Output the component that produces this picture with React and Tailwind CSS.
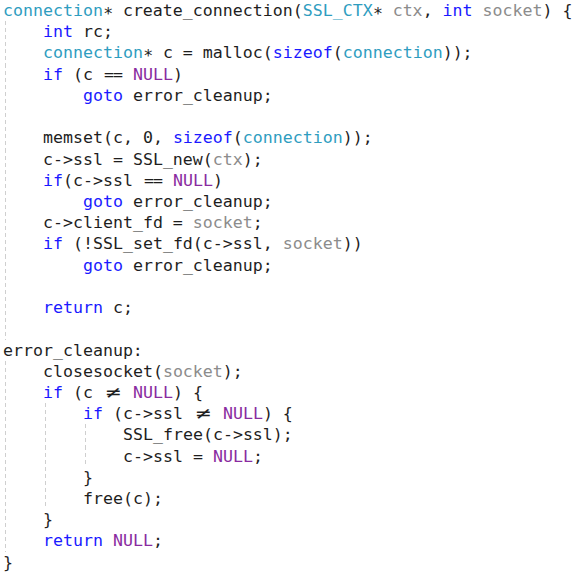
import React from 'react';

// token colours
const C = {
  D: 'text-[#1e1e1e]',
  K: 'text-[#1a1aff]',
  T: 'text-[#2f9dbf]',
  N: 'text-[#8a2ba0]',
  P: 'text-[#8c8c8c]',
};

const EQ = { eq: true };
const NE = { ne: true };

// [guides, indentSpaces, tokens]
const lines = [
  [0, 0, [['T', 'connection'], ['D', '\u2217 create_connection('], ['T', 'SSL_CTX'], ['D', '\u2217 '], ['P', 'ctx'], ['D', ', '], ['K', 'int'], ['D', ' '], ['P', 'socket'], ['D', ') {']]],
  [1, 4, [['K', 'int'], ['D', ' rc;']]],
  [1, 4, [['T', 'connection'], ['D', '\u2217 c = malloc('], ['K', 'sizeof'], ['D', '('], ['T', 'connection'], ['D', '));']]],
  [1, 4, [['K', 'if'], ['D', ' (c '], EQ, ['D', ' '], ['N', 'NULL'], ['D', ')']]],
  [1, 8, [['K', 'goto'], ['D', ' error_cleanup;']]],
  [1, 0, []],
  [1, 4, [['D', 'memset(c, 0, '], ['K', 'sizeof'], ['D', '('], ['T', 'connection'], ['D', '));']]],
  [1, 4, [['D', 'c->ssl = SSL_new('], ['P', 'ctx'], ['D', ');']]],
  [1, 4, [['K', 'if'], ['D', '(c->ssl '], EQ, ['D', ' '], ['N', 'NULL'], ['D', ')']]],
  [1, 8, [['K', 'goto'], ['D', ' error_cleanup;']]],
  [1, 4, [['D', 'c->client_fd = '], ['P', 'socket'], ['D', ';']]],
  [1, 4, [['K', 'if'], ['D', ' (!SSL_set_fd(c->ssl, '], ['P', 'socket'], ['D', '))']]],
  [1, 8, [['K', 'goto'], ['D', ' error_cleanup;']]],
  [1, 0, []],
  [1, 4, [['K', 'return'], ['D', ' c;']]],
  [1, 0, []],
  [0, 0, [['D', 'error_cleanup:']]],
  [1, 4, [['D', 'closesocket('], ['P', 'socket'], ['D', ');']]],
  [1, 4, [['K', 'if'], ['D', ' (c '], NE, ['D', ' '], ['N', 'NULL'], ['D', ') {']]],
  [2, 8, [['K', 'if'], ['D', ' (c->ssl '], NE, ['D', ' '], ['N', 'NULL'], ['D', ') {']]],
  [3, 12, [['D', 'SSL_free(c->ssl);']]],
  [3, 12, [['D', 'c->ssl = '], ['N', 'NULL'], ['D', ';']]],
  [2, 8, [['D', '}']]],
  [2, 8, [['D', 'free(c);']]],
  [1, 4, [['D', '}']]],
  [1, 4, [['K', 'return'], ['D', ' '], ['N', 'NULL'], ['D', ';']]],
  [0, 0, [['D', '}']]],
];

const Guide = () => (
  <span className="w-[40px] shrink-0 self-stretch pl-[2px]">
    <span className="block w-px h-full bg-[repeating-linear-gradient(to_bottom,#cfcfcf_0_4px,transparent_4px_7px)]" />
  </span>
);

const Token = ({ t }) => {
  if (t.eq) {
    return <span className="inline-flex w-[20px] justify-center tracking-[-1px] text-[#1e1e1e]">==</span>;
  }
  if (t.ne) {
    return (
      <span className="inline-flex w-[20px] justify-center text-[#1e1e1e]">
        <span className="inline-block scale-x-150">≠</span>
      </span>
    );
  }
  return <span className={C[t[0]]}>{t[1]}</span>;
};

export default function App() {
  return (
    <div className="w-[577px] h-[578px] bg-white overflow-hidden pl-[3px] font-['DejaVu_Sans_Mono',monospace] text-[16.6px] leading-[21.23px]">
      {lines.map(([guides, indent, tokens], i) => {
        const rest = Math.max(indent - guides * 4, 0);
        return (
          <div key={i} className="flex h-[21.23px] whitespace-pre">
            {Array.from({ length: guides }).map((_, g) => (
              <Guide key={g} />
            ))}
            {rest > 0 && <span>{' '.repeat(rest)}</span>}
            {tokens.map((t, j) => (
              <Token key={j} t={t} />
            ))}
          </div>
        );
      })}
    </div>
  );
}
